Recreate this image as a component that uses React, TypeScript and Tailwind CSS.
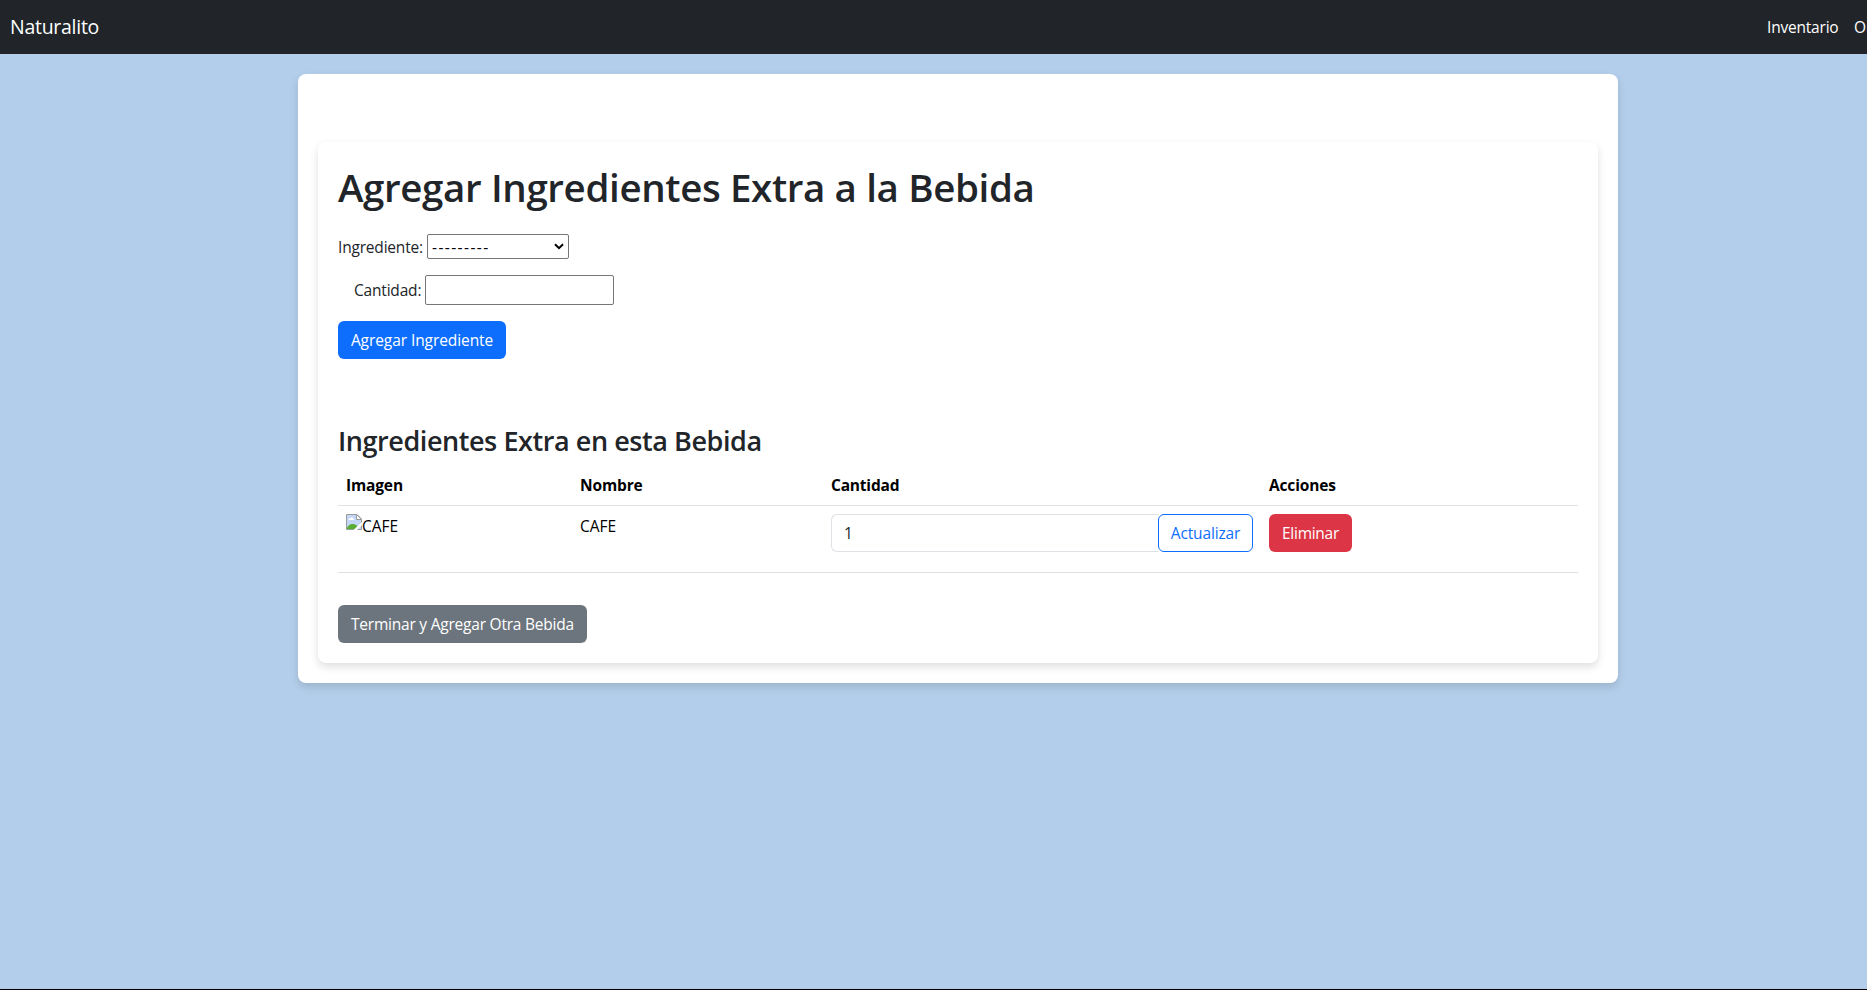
import type { ReactNode } from "react";

function BrokenImage() {
  return (
    <svg width="16" height="16" viewBox="0 0 16 16" className="shrink-0">
      <path d="M.5 .5h10.5l4.5 4.500v10.500H.5z" fill="#c3d6f6" />
      <path d="M2.500 6c0-1.200 1-1.600 1.600-1.400C4.500 3 6.800 3 7.100 4.600c1 0 1.400.6 1.400 1.400z" fill="#fff" />
      <path d="M1 15c0-3 3-5 6-5 2 0 3.500 1 4.500 2.500L9 15z" fill="#58ad34" />
      <path d="M.5 15.500V.5h10.500l4.500 4.500v10.500z" fill="none" stroke="#9b9b9b" />
      <path d="M10.500 .5v5h5z" fill="#fff" stroke="#9b9b9b" />
      <path d="M7.500 16 16 8v3l-5 5z" fill="#fff" />
    </svg>
  );
}

function Th({ children, className }: { children: ReactNode; className: string }) {
  return <th className={`h-[40px] px-2 pb-0 pt-2 text-left align-top font-bold ${className}`}>{children}</th>;
}

export default function App() {
  return (
    <div className="flex h-[990px] w-full flex-col overflow-hidden border-b border-black bg-[#b3ceeb] font-['Open_Sans',sans-serif] text-[15.5px] leading-6 text-[#212529]">
      <nav className="flex h-[54px] shrink-0 items-center justify-between bg-[#212529] pl-[10px] text-white">
        <a className="text-[19.5px] leading-[30px] tracking-[-0.27px]">Naturalito</a>
        <div className="-mt-px flex w-[100px] gap-4 overflow-hidden whitespace-nowrap">
          <a className="w-[71px] shrink-0 tracking-[-0.2px]">Inventario</a>
          <a className="shrink-0">Ordenes</a>
        </div>
      </nav>

      <main className="ml-[298px] mt-5 h-[609px] w-[1320px] rounded-lg bg-white p-5 pt-[68px] shadow-[0_4px_8px_rgba(0,0,0,0.13)]">
        <section className="h-[521px] rounded-lg bg-white p-5 shadow-[0_4px_8px_rgba(0,0,0,0.13)]">
          <h1 className="pt-px text-[38.5px] font-semibold leading-[48px] tracking-[-0.37px]">
            Agregar Ingredientes Extra a la Bebida
          </h1>

          <form>
            <div className="mt-[23px] flex h-[25px]">
              <label className="mt-px w-[89px] tracking-[-0.19px]">Ingrediente:</label>
              <div className="relative flex h-[25px] w-[142px] items-center rounded-[2px] border border-[#767676] bg-white pl-1 text-black">
                <span className="tracking-[1.41px]">---------</span>
                <svg width="10" height="7" viewBox="0 0 10 7" className="absolute right-[4px] top-[8px]">
                  <path d="M1 1.200 5 5.200 9 1.200" fill="none" stroke="#000" strokeWidth="2" />
                </svg>
              </div>
            </div>
            <div className="ml-4 mt-4 flex h-[30px]">
              <label className="mt-[3px] w-[71px] tracking-[-0.19px]">Cantidad:</label>
              <input className="h-[30px] w-[189px] rounded-[2px] border border-[#767676] bg-white" />
            </div>
            <button type="button" className="mt-4 flex h-[38px] w-[168px] items-center justify-center whitespace-nowrap rounded-md bg-[#0d6efd] tracking-[-0.08px] text-white">
              Agregar Ingrediente
            </button>
          </form>

          <h3 className="mt-[65px] text-[27px] font-semibold leading-[34px] tracking-[-0.43px]">
            Ingredientes Extra en esta Bebida
          </h3>
          <table className="mt-[7px] w-full table-fixed border-collapse text-black">
            <thead>
              <tr className="border-b border-[#dee2e6]">
                <Th className="w-[234px] tracking-[-0.15px]">Imagen</Th>
                <Th className="w-[251px] tracking-[-0.13px]">Nombre</Th>
                <Th className="w-[438px] tracking-[-0.2px]">Cantidad</Th>
                <Th className="tracking-[-0.15px]">Acciones</Th>
              </tr>
            </thead>
            <tbody>
              <tr className="h-[67px] border-b border-[#dee2e6] align-top">
                <td className="p-2">
                  <div className="flex">
                    <BrokenImage />
                    <span>CAFE</span>
                  </div>
                </td>
                <td className="p-2">CAFE</td>
                <td className="p-2">
                  <div className="flex h-[38px]">
                    <input
                      defaultValue="1"
                      className="w-[328px] rounded-l-md border border-r-0 border-[#dee2e6] bg-white px-3 text-[#212529]"
                    />
                    <button className="w-[95px] shrink-0 rounded-md border border-[#0d6efd] tracking-[-0.15px] text-[#0d6efd]">
                      Actualizar
                    </button>
                  </div>
                </td>
                <td className="p-2">
                  <button className="block h-[38px] w-[83px] rounded-md bg-[#dc3545] tracking-[-0.27px] text-white">
                    Eliminar
                  </button>
                </td>
              </tr>
            </tbody>
          </table>
          <button className="mt-8 flex h-[38px] w-[249px] items-center justify-center whitespace-nowrap rounded-md bg-[#6c757d] tracking-[-0.22px] text-white">
            Terminar y Agregar Otra Bebida
          </button>
        </section>
      </main>
    </div>
  );
}
